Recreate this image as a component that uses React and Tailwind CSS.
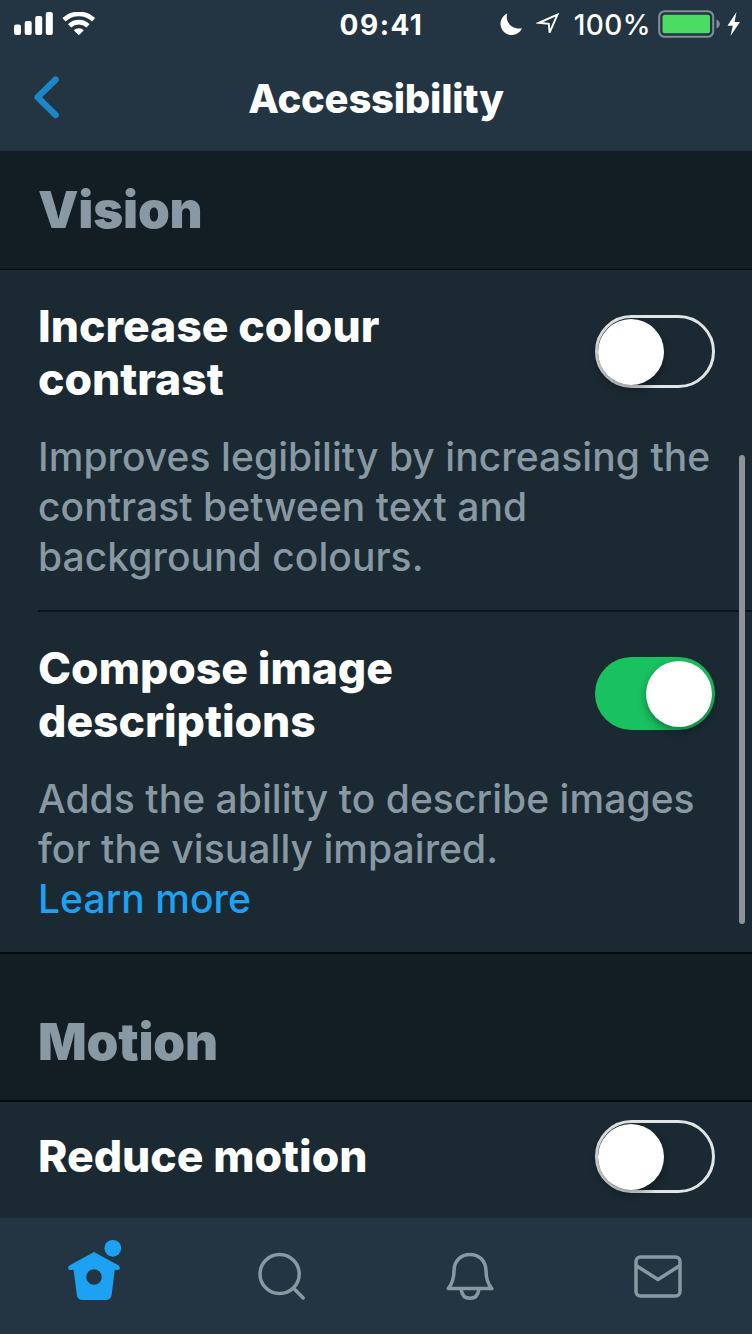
import React, { useState } from 'react';

const StatusBar = () => (
  <div className="flex h-12 items-center justify-between pl-3.5 pr-2.5">
    <div className="flex w-[325px] items-center">
      <svg className="h-6 w-[83px]" viewBox="0 0 83 24" fill="white">
        <rect x="0" y="12.5" width="7" height="10.5" rx="2" />
        <rect x="10.7" y="9" width="7" height="14" rx="2" />
        <rect x="21.2" y="4" width="7" height="19" rx="2" />
        <rect x="31.8" y="0" width="7" height="23" rx="2" />
        <g fill="none" stroke="white" strokeWidth="4.6">
          <path d="M50 7.8a21.6 21.6 0 0 1 29.6 0" />
          <path d="M55.6 13.8a13.3 13.3 0 0 1 18.4 0" />
        </g>
        <path d="M59.8 18.2a7.2 7.2 0 0 1 10 0L64.8 23.2z" />
      </svg>
    </div>
    <span className="ml-[7px] pt-px text-[28px] font-bold tracking-[1.5px]">09:41</span>
    <div className="flex w-[325px] items-center justify-end">
      <svg className="mr-[13px] h-6 w-6" viewBox="0 0 24 24" fill="white">
        <path d="M8.4 1.5C5.6 8.5 11.5 17.8 23 16.2A11.2 11.2 0 1 1 8.4 1.5z" />
      </svg>
      <svg className="mr-3.5 h-6 w-6" viewBox="0 0 24 24" fill="none" stroke="white" strokeWidth="1.9">
        <path d="M21.4 2.6L13.6 20.6L12.8 11.8L3 10.8z" />
      </svg>
      <span className="pt-0.5 text-[28px] font-medium tracking-[0.4px]">100%</span>
      <svg className="ml-[7px] h-7 w-[84px]" viewBox="0 0 84 28">
        <rect x="1.2" y="1.2" width="54" height="25.6" rx="5.5" fill="none" stroke="#84909a" strokeWidth="2" />
        <rect x="4.5" y="4.8" width="47.5" height="18.4" rx="2.5" fill="#4cdc64" />
        <path d="M58.5 9.5c4.4 1.8 4.4 7.2 0 9z" fill="#84909a" />
        <path d="M78.5 2L69.5 15.8h5.3L72.5 26L82 12h-5.4z" fill="white" />
      </svg>
    </div>
  </div>
);

const NavBar = () => (
  <div className="grid h-[102px] grid-cols-[1fr_auto_1fr] items-center pl-8">
    <button aria-label="Back" className="mb-1 w-8">
      <svg className="h-12 w-8" viewBox="0 0 32 48" fill="none" stroke="#1b86c8" strokeWidth="6.4" strokeLinecap="round" strokeLinejoin="round">
        <path d="M23.6 6.6L5.6 24.3L23.6 42" />
      </svg>
    </button>
    <h1 className="mr-8 text-[40px] leading-[50px] font-extrabold tracking-[-0.25px]">Accessibility</h1>
    <div />
  </div>
);

const Toggle = ({ on, onChange }) => (
  <button
    role="switch"
    aria-checked={on}
    onClick={() => onChange(!on)}
    className={`mb-[3px] flex h-[73px] w-[120px] shrink-0 items-center rounded-full ${
      on ? 'justify-end bg-[#19c160] pr-[3px]' : 'justify-start border-[3px] border-[#e2e5e6]'
    }`}
  >
    <span className="size-[66px] rounded-full bg-white shadow-[0_4px_8px_rgba(0,0,0,0.35)]" />
  </button>
);

const SectionHeader = ({ children, className }) => (
  <div className={`flex items-end border-[#050a0d] bg-[#131e24] pl-[38px] ${className}`}>
    <h2 className="text-[51px] leading-[60px] font-black tracking-[-0.2px] text-[#8899a3]">{children}</h2>
  </div>
);

const Setting = ({ title, on, onChange, children, className }) => (
  <div className={`ml-[38px] pr-[37.5px] ${className}`}>
    <div className="flex items-center justify-between">
      <h3 className="text-[44.5px] leading-[53px] font-extrabold">{title}</h3>
      <Toggle on={on} onChange={onChange} />
    </div>
    {children && (
      <p className="mt-[26px] -mr-8 text-[39px] leading-[50px] font-medium tracking-[0.06px] text-[#8899a3]">{children}</p>
    )}
  </div>
);

const TabBar = () => (
  <div className="grid h-[116px] grid-cols-4 bg-[#233543]">
    <button aria-label="Home" className="flex justify-center pt-5">
      <svg className="h-16 w-14" viewBox="0 0 56 64">
        <path
          fill="#1da1f2"
          fillRule="evenodd"
          d="M28 14L52.2 27.3Q54.2 28.7 53.8 31Q52.8 32.7 48.8 31.4L45.7 56.5Q45 62 39.5 62H16.8Q11.5 62 10.8 56.5L7.5 31.4Q3.2 32.7 2.2 31Q1.8 28.7 3.8 27.3zM28 31.2a7.8 7.8 0 1 0 0 15.6a7.8 7.8 0 1 0 0-15.6z"
        />
        <circle cx="46.8" cy="10.3" r="8.4" fill="#1da1f2" />
      </svg>
    </button>
    <button aria-label="Search" className="flex justify-center pt-8">
      <svg className="h-[52px] w-12" viewBox="0 0 48 52" fill="none" stroke="#8899a3" strokeWidth="3.5" strokeLinecap="round">
        <circle cx="21.6" cy="24" r="19.6" />
        <path d="M36.6 39.2L45.2 48" />
      </svg>
    </button>
    <button aria-label="Notifications" className="flex justify-center pt-8">
      <svg className="h-[52px] w-12" viewBox="0 0 48 52" fill="none" stroke="#8899a3" strokeWidth="3.5" strokeLinejoin="round">
        <path d="M2.2 38.6C7 33 8 27.5 8 20.5C8.3 10.5 15 4.4 24 4.4S39.7 10.5 40 20.5C40 27.5 41 33 45.8 38.6z" />
        <path d="M15.2 39.5C15.8 45 19 48.3 24 48.3S32.2 45 32.8 39.5" />
      </svg>
    </button>
    <button aria-label="Messages" className="flex justify-center pt-8">
      <svg className="h-[52px] w-12" viewBox="0 0 48 52" fill="none" stroke="#8899a3" strokeWidth="3.5" strokeLinejoin="round">
        <rect x="2" y="7" width="44" height="39" rx="4.5" />
        <path d="M2 15.5L24 29.5L46 15.5" />
      </svg>
    </button>
  </div>
);

const App = () => {
  const [contrast, setContrast] = useState(false);
  const [descriptions, setDescriptions] = useState(true);
  const [reduceMotion, setReduceMotion] = useState(false);

  return (
    <div className="relative flex h-[1334px] w-[752px] flex-col overflow-hidden bg-[#1a2932] font-['Inter',sans-serif] text-white">
      <header className="h-[151px] border-b border-[#1e2d38] bg-[#233543]">
        <StatusBar />
        <NavBar />
      </header>

      <main className="flex-1">
        <SectionHeader className="h-[119px] border-b pb-[29px]">Vision</SectionHeader>
        <Setting
          title={<>Increase colour<br />contrast</>}
          on={contrast}
          onChange={setContrast}
          className="h-[342px] border-b-2 border-[#0b141a] pt-[30px]"
        >
          Improves legibility by increasing the<br />
          contrast between text and<br />
          background colours.
        </Setting>
        <Setting
          title={<>Compose image<br />descriptions</>}
          on={descriptions}
          onChange={setDescriptions}
          className="h-[340px] pt-[30px]"
        >
          Adds the ability to describe images<br />
          for the visually impaired.<br />
          <a href="#learn-more" className="text-[#1da1f2]">Learn more</a>
        </Setting>

        <SectionHeader className="h-[150px] border-y-2 pb-[28px]">Motion</SectionHeader>
        <Setting
          title={<span className="block pb-1">Reduce motion</span>}
          on={reduceMotion}
          onChange={setReduceMotion}
          className="h-[116px] pt-[18px]"
        />
      </main>

      <TabBar />

      {/* Scroll indicator */}
      <div className="absolute top-[455px] right-[7px] h-[469px] w-1.5 rounded-full bg-[#8d9499]" />
    </div>
  );
};

export default App;
